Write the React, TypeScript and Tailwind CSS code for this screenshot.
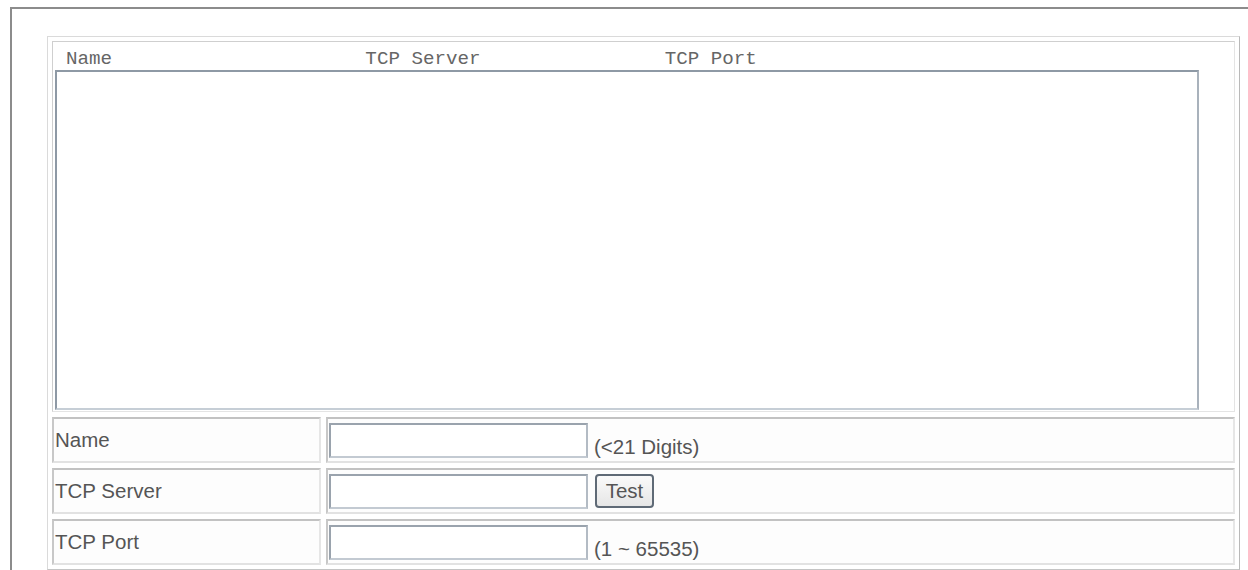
import React from "react";

const cellBorder =
  "border-2 border-t-[#c2c2c2] border-l-[#c8c8c8] border-b-[#e2e2e2] border-r-[#e6e6e6]";

function FormRow({
  label,
  children,
}: {
  label: string;
  children: React.ReactNode;
}) {
  return (
    <div className="flex h-[46px] gap-[5px]">
      <div
        className={`${cellBorder} flex w-[269px] items-center bg-[#fdfdfd] pl-[1px] text-[20.5px] text-[#555]`}
      >
        {label}
      </div>
      <div
        className={`${cellBorder} flex flex-1 items-center bg-[#fdfdfd] pl-[1px]`}
      >
        {children}
      </div>
    </div>
  );
}

function TextInput() {
  return (
    <input
      type="text"
      className="h-[35px] w-[259px] border-2 border-t-[#9aa3ad] border-l-[#9aa3ad] border-b-[#c3cad2] border-r-[#b3bbc4] bg-white outline-none"
    />
  );
}

export default function App() {
  return (
    <div
      className="h-[570px] overflow-hidden bg-white pl-[10px] pt-[7px]"
      style={{ fontFamily: '"Liberation Sans", Arial, sans-serif' }}
    >
      <div className="h-full border-l-2 border-t-2 border-[#8c8c8c] pl-[35px] pt-[27px]">
        <div className="flex w-[1193px] flex-col gap-[5px] border border-t-[#dadada] border-l-[#dadada] border-r-[#b9b9b9] border-b-[#c4c4c4] p-[4px]">
          {/* list of entries */}
          <div className="flex h-[371px] flex-col border border-t-[#cfcfcf] border-l-[#cfcfcf] border-b-[#e4e4e4] border-r-[#e4e4e4]">
            <div
              className="h-[28px] whitespace-pre pl-[13px] pt-[7px] text-[19.2px] leading-[20px] text-[#666]"
              style={{ fontFamily: '"Liberation Mono", "Courier New", monospace' }}
            >
              {"Name                      TCP Server                TCP Port"}
            </div>
            <div className="ml-[2px] h-[340px] w-[1144px] border-2 border-t-[#8e99a5] border-l-[#8e99a5] border-b-[#c6ced6] border-r-[#a9b2bc] bg-white" />
          </div>

          <FormRow label="Name">
            <TextInput />
            <span className="ml-[6px] self-end pb-[3px] text-[20.5px] leading-[22px] text-[#555]">
              (&lt;21 Digits)
            </span>
          </FormRow>

          <FormRow label="TCP Server">
            <TextInput />
            <button className="ml-[7px] h-[34px] w-[59px] rounded-[4px] border-2 border-[#5f6a76] bg-gradient-to-b from-[#fafafa] to-[#e6e6e6] text-[20.5px] leading-none text-[#555]">
              Test
            </button>
          </FormRow>

          <FormRow label="TCP Port">
            <TextInput />
            <span className="ml-[6px] self-end pb-[3px] text-[20.5px] leading-[22px] text-[#555]">
              (1 ~ 65535)
            </span>
          </FormRow>
        </div>
      </div>
    </div>
  );
}
